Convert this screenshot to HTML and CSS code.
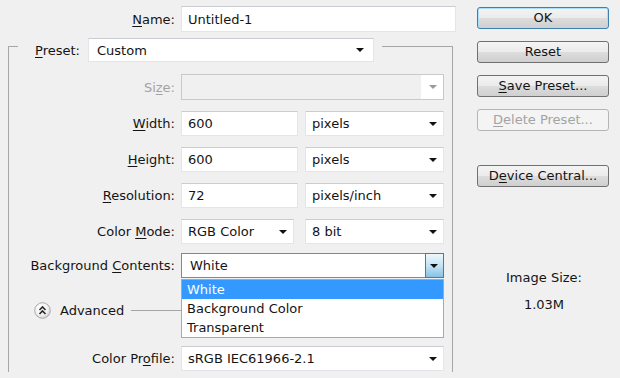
FILE: index.html
```html
<!DOCTYPE html>
<html lang="en">
<head>
  <meta charset="UTF-8">
  <title>New</title>
  <link rel="stylesheet" href="styles.css">
</head>
<body>
  <div class="dialog">
    <!-- Left: form -->
    <div class="form">
      <div class="row name-row">
        <label><u>N</u>ame:</label>
        <div class="field name-field">Untitled-1</div>
      </div>

      <div class="group">
        <div class="preset">
          <label><u>P</u>reset:</label>
          <div class="field select preset-select">Custom<span class="arrow"></span></div>
        </div>

        <div class="row size-row">
          <label class="disabled">Si<u>z</u>e:</label>
          <div class="field select full disabled-select"><span class="drop-box"><span class="arrow grey"></span></span></div>
        </div>

        <div class="row">
          <label><u>W</u>idth:</label>
          <div class="field num">600</div>
          <div class="field select unit">pixels<span class="arrow"></span></div>
        </div>

        <div class="row">
          <label><u>H</u>eight:</label>
          <div class="field num">600</div>
          <div class="field select unit">pixels<span class="arrow"></span></div>
        </div>

        <div class="row">
          <label><u>R</u>esolution:</label>
          <div class="field num">72</div>
          <div class="field select unit">pixels/inch<span class="arrow"></span></div>
        </div>

        <div class="row">
          <label>Color <u>M</u>ode:</label>
          <div class="field select mode">RGB Color<span class="arrow"></span></div>
          <div class="field select unit bits">8 bit<span class="arrow"></span></div>
        </div>

        <div class="row bg-row">
          <label>Background <u>C</u>ontents:</label>
          <div class="field select full open-select">White<span class="drop-btn"><span class="arrow"></span></span>
            <ul class="drop-list">
              <li class="active">White</li>
              <li>Background Color</li>
              <li>Transparent</li>
            </ul>
          </div>
        </div>

        <div class="advanced">
          <svg width="17" height="17" viewBox="0 0 17 17">
            <defs>
              <radialGradient id="knob" cx="0.4" cy="0.35" r="0.7">
                <stop offset="0" stop-color="#ffffff"/>
                <stop offset="0.6" stop-color="#f2f2f2"/>
                <stop offset="1" stop-color="#cfcfcf"/>
              </radialGradient>
            </defs>
            <circle cx="8.5" cy="8.5" r="7.8" fill="url(#knob)" stroke="#a9a9a9"/>
            <polyline points="5.5,8 8.5,5 11.5,8" fill="none" stroke="#2a2a2a" stroke-width="1.6"/>
            <polyline points="5.5,12 8.5,9 11.5,12" fill="none" stroke="#2a2a2a" stroke-width="1.6"/>
          </svg>
          <span class="adv-label">Advanced</span>
          <span class="adv-line"></span>
        </div>

        <div class="row profile-row">
          <label>Color Pr<u>o</u>file:</label>
          <div class="field select full">sRGB IEC61966-2.1<span class="arrow"></span></div>
        </div>

        <!-- next row, only its top edge is in view -->
        <div class="row last-row">
          <div class="field full"></div>
        </div>
      </div>
    </div>

    <!-- Right: buttons -->
    <div class="side">
      <div class="btn default">OK</div>
      <div class="btn">Reset</div>
      <div class="btn"><u>S</u>ave Preset...</div>
      <div class="btn disabled-btn"><u>D</u>elete Preset...</div>
      <div class="btn device">D<u>e</u>vice Central...</div>
      <div class="image-size">
        <div>Image Size:</div>
        <div class="size-value">1.03M</div>
      </div>
    </div>
  </div>
</body>
</html>
```

FILE: styles.css
```css
/* General */
body {
  margin: 0;
  background-color: #f0f0f0;
  color: #141414;
  font-family: "DejaVu Sans", sans-serif;
  font-size: 13px;
  overflow: hidden;
  height: 378px;
}

u {
  text-decoration: underline;
  text-underline-offset: 2px;
}

.dialog {
  display: flex;
  padding-top: 6px;
}

/* Form column */
.form {
  width: 457px;
}

.row {
  display: flex;
  align-items: center;
  height: 25px;
  margin-top: 11px;
}

.row label {
  width: 166px;
  margin-right: 6px;
  text-align: right;
  white-space: nowrap;
}

.row label.disabled {
  color: #a3a3a3;
}

.name-row {
  margin-top: 0;
  height: 26px;
}

.name-row label {
  width: 175px;
}

/* Fields */
.field {
  position: relative;
  box-sizing: border-box;
  height: 100%;
  background-color: #fff;
  border: 1px solid #e2e5ea;
  border-top-color: #c9ccd2;
  padding-left: 6px;
  display: flex;
  align-items: center;
  white-space: nowrap;
}

.name-field {
  width: 275px;
}

.full {
  width: 263px;
}

.num {
  width: 117px;
}

.unit {
  width: 139px;
  margin-left: 7px;
}

.mode {
  width: 113px;
}

.bits {
  margin-left: 11px;
}

.arrow {
  position: absolute;
  right: 6px;
  top: 50%;
  margin-top: -2px;
  width: 0;
  height: 0;
  border-left: 4px solid transparent;
  border-right: 4px solid transparent;
  border-top: 4px solid #111;
}

.arrow.grey {
  border-top-color: #9a9a9a;
}

/* Group box */
.group {
  margin: 14px 0 0 8px;
  width: 445px;
  height: 326px;
  box-sizing: border-box;
  border: 1px solid #a6a6a6;
  border-bottom: none;
}

.preset {
  display: flex;
  align-items: center;
  height: 24px;
  margin: -9px 0 0 9px;
  width: 364px;
  box-sizing: border-box;
  padding: 0 7px 0 17px;
  background-color: #f0f0f0;
}

.preset label {
  width: 47px;
  margin-right: 6px;
  white-space: nowrap;
}

.preset-select {
  width: 286px;
  padding-left: 8px;
}

.preset-select .arrow {
  right: 9px;
}

.size-row {
  margin-top: 12px;
  height: 26px;
}

.disabled-select {
  background-color: #f0f0f0;
  border-color: #c7c9cc;
}

.drop-box {
  position: absolute;
  right: 0;
  top: 0;
  bottom: 0;
  width: 22px;
  background-color: #fff;
}

.bg-row {
  margin-top: 9px;
}

.open-select {
  border-color: #6a8fae;
  padding-left: 8px;
}

.drop-btn {
  position: absolute;
  right: -1px;
  top: -1px;
  bottom: -1px;
  width: 19px;
  box-sizing: border-box;
  border: 1px solid #3c7fb1;
  background: linear-gradient(to bottom, #eef7fc, #c4e3f5 50%, #86c2e6);
}

.drop-btn .arrow {
  right: 5px;
}

.drop-list {
  position: absolute;
  z-index: 2;
  left: -1px;
  top: 25px;
  width: 263px;
  box-sizing: border-box;
  margin: 0;
  padding: 0;
  list-style: none;
  background-color: #fff;
  border: 1px solid #a9a9a9;
}

.drop-list li {
  height: 19px;
  line-height: 19px;
  padding-left: 5px;
}

.drop-list li.active {
  background-color: #3399ff;
  color: #fff;
}

/* Advanced toggle */
.advanced {
  display: flex;
  align-items: center;
  height: 17px;
  margin: 24px 0 0 25px;
}

.adv-label {
  margin-left: 9px;
}

.adv-line {
  flex: 1;
  height: 1px;
  margin: 0 8px 0 7px;
  background-color: #a6a6a6;
}

.profile-row {
  margin-top: 27px;
}

.last-row {
  margin-top: 7px;
  padding-left: 172px;
  height: 2px;
}

.last-row .field {
  border-bottom: none;
}

/* Side column */
.side {
  width: 132px;
  margin-left: 20px;
  padding-top: 1px;
}

.btn {
  box-sizing: border-box;
  height: 22px;
  margin-bottom: 12px;
  border: 1px solid #707070;
  border-radius: 3px;
  background: linear-gradient(to bottom, #f4f4f4, #ebebeb 50%, #dddddd 51%, #cfcfcf);
  text-align: center;
  line-height: 20px;
  white-space: nowrap;
}

.btn.default {
  border-color: #3c7fb1;
  box-shadow: inset 0 0 0 1px #a9dff7;
}

.btn.disabled-btn {
  color: #a3a3a3;
  border-color: #b5b5b5;
  background: #f4f4f4;
}

.btn.device {
  margin-top: 34px;
}

.image-size {
  margin-top: 83px;
  text-align: center;
  padding-left: 2px;
}

.size-value {
  margin-top: 12px;
}
```
